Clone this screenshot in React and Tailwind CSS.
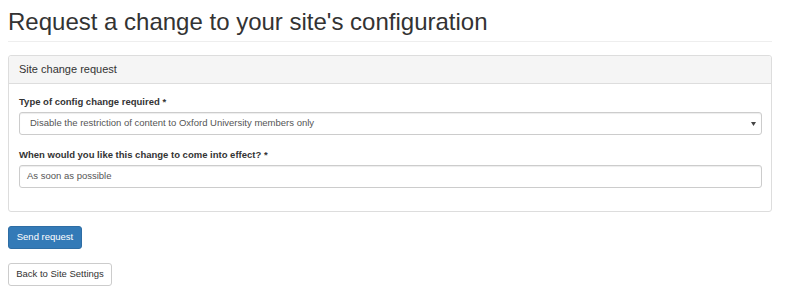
export default function App() {
  return (
    <div className="min-h-[293px] bg-white pl-[8px] pr-[28px] font-['Liberation_Sans',Arial,sans-serif] text-[#333]">
      <h1 className="pt-[9px] pb-[6px] border-b border-[#eee] text-[24px] leading-[26px] font-normal">
        Request a change to your site's configuration
      </h1>

      <div className="mt-[13px] rounded-[3px] border border-[#ddd] bg-white">
        <div className="flex h-[28px] items-center border-b border-[#ddd] bg-[#f5f5f5] px-[10px] text-[11px] rounded-t-[3px]">
          Site change request
        </div>
        <div className="pl-[10px] pr-[9px] pt-[10px] pb-[23px]">
          <label className="block mb-[3px] text-[9.5px] leading-[15px] font-bold">
            Type of config change required *
          </label>
          <div className="flex h-[23px] items-center justify-between rounded-[3px] border border-[#ccc] pl-[10px] pr-[5px] text-[9.5px] text-[#555] shadow-[inset_0_1px_1px_rgba(0,0,0,0.075)]">
            <span>Disable the restriction of content to Oxford University members only</span>
            <svg width="5" height="4" viewBox="0 0 5 4">
              <path d="M0 0 L5 0 L2.5 4 Z" fill="#444" />
            </svg>
          </div>

          <label className="block mt-[12px] mb-[3px] text-[9.5px] leading-[15px] font-bold">
            When would you like this change to come into effect? *
          </label>
          <div className="flex h-[23px] items-center rounded-[3px] border border-[#ccc] px-[7px] text-[9.5px] text-[#555] shadow-[inset_0_1px_1px_rgba(0,0,0,0.075)]">
            As soon as possible
          </div>
        </div>
      </div>

      <div className="mt-[14px] flex flex-col items-start gap-[14px]">
        <button className="flex h-[23px] w-[74px] items-center justify-center rounded-[3px] border border-[#2e6da4] bg-[#337ab7] text-[9.5px] text-white">
          Send request
        </button>
        <button className="flex h-[23px] w-[104px] items-center justify-center rounded-[3px] border border-[#ccc] bg-white text-[9.5px] text-[#333]">
          Back to Site Settings
        </button>
      </div>
    </div>
  );
}
